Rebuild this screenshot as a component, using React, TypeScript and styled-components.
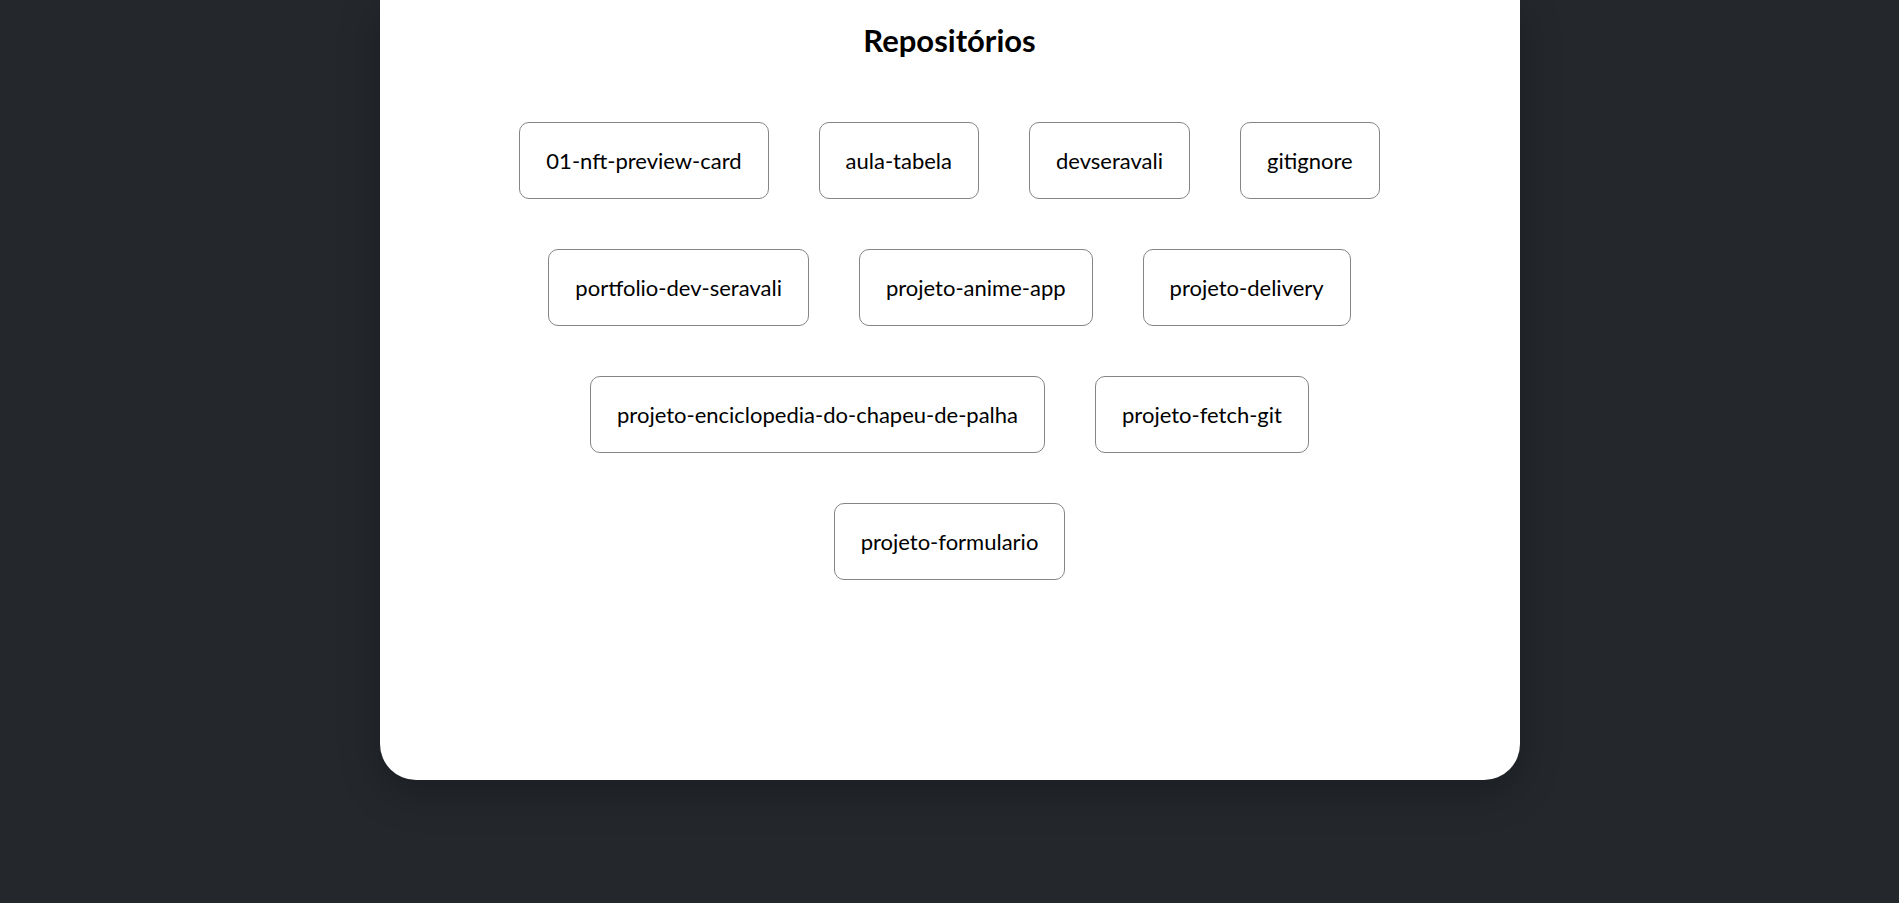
import React from "react";
import styled, { createGlobalStyle } from "styled-components";

const GlobalStyle = createGlobalStyle`
  html, body {
    margin: 0;
    padding: 0;
    background: #24282d;
    font-family: "Lato", "Noto Sans", sans-serif;
  }
  * { box-sizing: border-box; }
`;

const Page = styled.div`
  min-height: 903px;
  display: flex;
  justify-content: center;
  align-items: flex-start;
`;

const Card = styled.section`
  width: 1140px;
  background: #ffffff;
  border-radius: 0 0 36px 36px;
  box-shadow: 0 12px 40px rgba(0, 0, 0, 0.28);
  padding: 22px 0 200px;
  display: flex;
  flex-direction: column;
  align-items: center;
`;

const Title = styled.h2`
  margin: 0;
  font-size: 31px;
  font-weight: 700;
  color: #000;
  line-height: 36px;
`;

const RepoList = styled.div`
  margin-top: 64px;
  width: 920px;
  display: flex;
  flex-wrap: wrap;
  justify-content: center;
  gap: 50px;
`;

const RepoButton = styled.a`
  display: flex;
  align-items: center;
  justify-content: center;
  height: 77px;
  padding: 0 26px;
  border: 1px solid #858585;
  border-radius: 10px;
  background: #fff;
  color: #000;
  font-size: 22px;
  text-decoration: none;
  white-space: nowrap;
  cursor: pointer;
`;

const repos = [
  "01-nft-preview-card",
  "aula-tabela",
  "devseravali",
  "gitignore",
  "portfolio-dev-seravali",
  "projeto-anime-app",
  "projeto-delivery",
  "projeto-enciclopedia-do-chapeu-de-palha",
  "projeto-fetch-git",
  "projeto-formulario",
];

export default function App() {
  return (
    <>
      <GlobalStyle />
      <Page>
        <Card>
          <Title>Repositórios</Title>
          <RepoList>
            {repos.map((r) => (
              <RepoButton key={r}>{r}</RepoButton>
            ))}
          </RepoList>
        </Card>
      </Page>
    </>
  );
}
